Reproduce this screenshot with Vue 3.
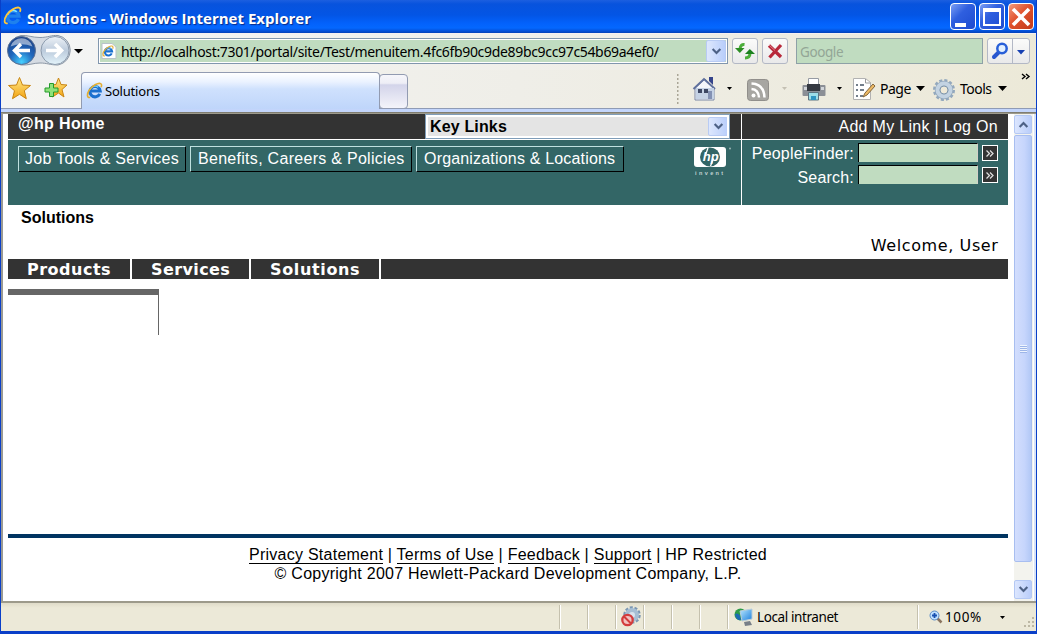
<script setup>
const menus = [
  { label: 'Job Tools & Services', cls: 'jobs' },
  { label: 'Benefits, Careers & Policies', cls: 'benefits' },
  { label: 'Organizations & Locations', cls: 'orgs' },
]
const tabs = [
  { label: 'Products', cls: 'products' },
  { label: 'Services', cls: 'services' },
  { label: 'Solutions', cls: 'solutions' },
]
const footerLinks = ['Privacy Statement', 'Terms of Use', 'Feedback', 'Support']
</script>

<template>
  <div class="window">
    <svg class="defs" width="0" height="0">
      <defs>
        <radialGradient id="orbBlue" cx=".5" cy=".9" r=".85">
          <stop offset="0" stop-color="#45d0ff" /><stop offset=".5" stop-color="#2067bd" /><stop offset="1" stop-color="#1a4288" />
        </radialGradient>
        <linearGradient id="orbPale" x1="0" y1="0" x2="0" y2="1">
          <stop offset="0" stop-color="#eef2f7" /><stop offset=".5" stop-color="#bccbdc" /><stop offset="1" stop-color="#e3f3fb" />
        </linearGradient>
        <linearGradient id="gold" x1="0" y1="0" x2="0" y2="1">
          <stop offset="0" stop-color="#ffe98a" /><stop offset="1" stop-color="#f3a412" />
        </linearGradient>
        <linearGradient id="screen" x1="0" y1="0" x2="1" y2="1">
          <stop offset="0" stop-color="#b8e8ff" /><stop offset="1" stop-color="#1d7fdc" />
        </linearGradient>
        <symbol id="ie" viewBox="0 0 18 18">
          <path d="M14.6 12.6A5.500 5.500 0 1 1 15.100 9.600H5.500" fill="none" stroke="#1a70cf" stroke-width="3.200" />
          <path d="M4.300 8.300a5.500 5.500 0 0 1 8.700-2.800" fill="none" stroke="#6fcdf7" stroke-width="1.300" />
          <path d="M4.400 16.200C1 17.500.5 13 3.500 8.500 7 3.500 12.500 1 15 1.500c1.800.4 1.800 2.200 1 4" fill="none" stroke="#e3ae32" stroke-width="1.700" />
        </symbol>
        <symbol id="chev" viewBox="0 0 10 8">
          <path d="M1.500 1.800 5 5.300l3.500-3.500" fill="none" stroke="#4d6185" stroke-width="2" />
        </symbol>
      </defs>
    </svg>

    <header class="titlebar">
      <svg class="title-icon" width="19" height="19"><use href="#ie" /></svg>
      <span class="title">Solutions - Windows Internet Explorer</span>
      <span class="caption min"><i></i></span>
      <span class="caption max"><i></i></span>
      <span class="caption close">
        <svg width="22" height="22" viewBox="0 0 22 22"><path d="M3 3 19 19M19 3 3 19" stroke="#fff" stroke-width="3.600" /></svg>
      </span>
    </header>

    <div class="navrow">
      <svg class="orbs" width="80" height="34" viewBox="0 0 80 34">
        <path d="M17 1.500C24 1 28 3.500 36 3.500S47 1 54 1.500a15 15 0 0 1 0 29.500C46 31 43 29 36 29s-11 2.500-19 2A15 15 0 0 1 17 1.500z" fill="#d5dbe3" stroke="#8b97a6" />
        <circle cx="17.500" cy="16.500" r="14" fill="url(#orbBlue)" stroke="#5a6f93" />
        <path d="M6.500 12.500a11.500 11.500 0 0 1 22 0Q17.500 8 6.500 12.500z" fill="#fff" opacity=".5" />
        <path d="M26 16.500H11.500M17 10l-6.500 6.500L17 23" fill="none" stroke="#fff" stroke-width="3.400" />
        <circle cx="51" cy="16.500" r="14" fill="url(#orbPale)" stroke="#8c9bad" />
        <path d="M42 16.500H56.500M51 10l6.500 6.500L51 23" fill="none" stroke="#fff" stroke-width="3.600" />
        <path d="M70 15h9l-4.500 4.500z" fill="#000" />
      </svg>
      <div class="address">
        <svg class="page-icon" width="16" height="16" viewBox="0 0 16 16"><path d="M1 .5h10L15 4v11.500H1z" fill="#fff" stroke="#b9c3c9" /><use href="#ie" x="1" y="2" width="12" height="12" /></svg>
        <span class="url">http://localhost:7301/portal/site/Test/menuitem.4fc6fb90c9de89bc9cc97c54b69a4ef0/</span>
        <span class="drop"><svg width="11" height="9"><use href="#chev" /></svg></span>
      </div>
      <span class="tool refresh">
        <svg width="20" height="18" viewBox="0 0 20 18"><path d="M9.500 2.500Q5.500 2 5 7" fill="none" stroke="#4cae3a" stroke-width="3" /><path d="M0 6h9.500L4.800 11z" fill="#2d8d25" /><path d="M10 16q5 0 5-5" fill="none" stroke="#4cae3a" stroke-width="3" /><path d="M10 12 14.800 7 20 12z" fill="#1c8120" /></svg>
      </span>
      <span class="tool stop">
        <svg width="18" height="18" viewBox="0 0 18 18"><path d="M3 3.500 15 15M15 3 3.500 15.500" stroke="#b8283a" stroke-width="3.300" /><path d="M3 3 9 8.500" stroke="#e07a84" /></svg>
      </span>
      <span class="websearch">Google</span>
      <span class="tool find">
        <svg width="24" height="24" viewBox="0 0 24 24"><path d="m11 13-5 5" stroke="#2856cf" stroke-width="4" stroke-linecap="round" /><circle cx="14" cy="9.500" r="4.700" fill="#e2f0ff" stroke="#285fd8" stroke-width="2.500" /></svg>
        <i></i>
        <svg width="16" height="24" viewBox="0 0 16 24"><path d="M4 11h8l-4 4.500z" fill="#1740b2" /></svg>
      </span>
    </div>

    <div class="tabrow">
      <div class="favs">
        <svg width="25" height="25" viewBox="0 0 25 25"><path d="m12.500 1.500 3 7.500 8 .5-6.200 5.200 2 8-6.800-4.400-7 4.400 2-8L1.500 9.500l8-.5z" fill="url(#gold)" stroke="#c98512" /></svg>
        <svg width="25" height="25" viewBox="0 0 25 25"><path d="m15.500 2 2.500 6.500 6 .5-5 4.500 2 7.500-5.500-4-6 4 2-7.500L6.500 9l6.500-.5z" fill="url(#gold)" stroke="#c98512" /><path d="M6.500 7.500h4v4.500H15v4h-4.500v4.500h-4V16H2v-4h4.500z" fill="#8ee27a" stroke="#249a2d" /></svg>
      </div>
      <div class="tab active"><svg width="17" height="17"><use href="#ie" /></svg><span>Solutions</span></div>
      <div class="tab blank"></div>
      <div class="commands">
        <svg width="360" height="40" viewBox="0 0 360 40">
          <path d="M.5 4v30" stroke="#aaa697" stroke-width="2" stroke-dasharray="2 2" />
          <!-- home -->
          <path d="M18 18 28 9l9 9v12H18z" fill="#f4f6fa" stroke="#7b87a5" />
          <path d="M32 7h4v8l-4-4z" fill="#35448b" /><path d="M16.500 19 27 9l11 10" fill="none" stroke="#60719d" stroke-width="2" />
          <path d="M19 18h18v11H19z" fill="#c5d2e5" /><path d="M21 19h4v4h-4zM27 19h4v4h-4z" fill="#3d4763" /><path d="M31 21h4v8h-4z" fill="#8391b3" />
          <path d="M50 17h5l-2.500 3z" />
          <!-- feeds -->
          <rect x="70.500" y="9.500" width="21" height="21" rx="3" fill="#a7a6a2" stroke="#918f8b" />
          <circle cx="76.500" cy="25.500" r="2" fill="#fff" /><path d="M74.500 19q7 .5 7.500 8.500M74.500 13.500Q87 14 87.500 27.500" fill="none" stroke="#fff" stroke-width="2.500" />
          <path d="M105 17h5l-2.500 3z" fill="#c4c0b3" />
          <!-- print -->
          <path d="M131.500 8.500h10V18h-10z" fill="#fff" stroke="#969ba3" /><rect x="125.500" y="15" width="23" height="11" rx="1" fill="#8b8f96" /><path d="M130 14h13v7h-13z" fill="#343941" /><path d="M127 17h3v3h-3zM144 17h3v3h-3z" fill="#d1d5da" /><path d="M131.500 22.500h10V30h-10z" fill="#9cdee9" stroke="#5c7481" /><path d="M134 26h5v4h-5z" fill="#3096c2" />
          <path d="M160 17h5l-2.500 3z" />
          <!-- page -->
          <path d="M176.500 8.500h12l5 4v17h-17z" fill="#fff" stroke="#b2b2b2" /><path d="M188.500 9v4h5" fill="none" stroke="#999" /><path d="M179 15h2m-2 5h2m-2 6h2M183 15h4m-4 5h4m-4 6h3" stroke="#465465" stroke-width="1.500" /><path d="m186 27 2-4 8-9 2 2-8 9z" fill="#edba66" stroke="#82663e" />
          <path d="M239 16h9l-4.500 5z" />
          <!-- gear -->
          <circle cx="267" cy="20" r="9.500" fill="none" stroke="#93a8bd" stroke-width="3" stroke-dasharray="3 1.975" />
          <circle cx="267" cy="20" r="6.700" fill="none" stroke="#93a8bd" stroke-width="5" /><circle cx="267" cy="20" r="6.500" fill="none" stroke="#c3d3e2" stroke-width="4" /><circle cx="267" cy="20" r="4" fill="#eee9d8" stroke="#7f97ae" />
          <path d="M321 16h9l-4.500 5z" />
          <path d="m345 4 3 2.500-3 2.500m4-5 3 2.500-3 2.500" fill="none" stroke="#000" stroke-width="1.400" />
        </svg>
        <span class="cmd page">Page</span><span class="cmd tools">Tools</span>
      </div>
    </div>
    <div class="band"></div>

    <div class="viewport">
      <main>
        <div class="hp-top">
          <b class="home">@hp Home</b>
          <div class="keylinks"><b>Key Links</b><span class="drop"><svg width="11" height="9"><use href="#chev" /></svg></span></div>
          <div class="account">Add My Link | Log On</div>
        </div>
        <div class="hp-mast">
          <nav><span v-for="m in menus" :key="m.label" class="menu" :class="m.cls">{{ m.label }}</span></nav>
          <svg class="hp-logo" width="40" height="32" viewBox="0 0 40 32">
            <rect x="1" y="1" width="32" height="20" rx="3" fill="#fff" />
            <ellipse cx="17" cy="11" rx="10" ry="9.500" fill="#336666" />
            <text x="9.800" y="14.800" class="hp">hp</text>
            <path d="m15 2-2.500 7M20.500 12.500 17.500 20" stroke="#fff" stroke-width="1.300" />
            <circle cx="37" cy="2.500" r="1" fill="#9ab5b5" />
            <text x="2" y="29" class="invent">invent</text>
          </svg>
          <div class="finders">
            <div class="finder"><span>PeopleFinder:</span><i class="field"></i><i class="go"><svg width="10" height="9" viewBox="0 0 10 9"><path d="m1.500 1.500 3 3-3 3m3.500-6 3 3-3 3" fill="none" stroke="#ddd" stroke-width="1.300" /></svg></i></div>
            <div class="finder"><span>Search:</span><i class="field"></i><i class="go"><svg width="10" height="9" viewBox="0 0 10 9"><path d="m1.500 1.500 3 3-3 3m3.500-6 3 3-3 3" fill="none" stroke="#ddd" stroke-width="1.300" /></svg></i></div>
          </div>
        </div>
        <h1>Solutions</h1>
        <div class="welcome">Welcome, User</div>
        <div class="sitetabs"><span v-for="t in tabs" :key="t.label" :class="t.cls">{{ t.label }}</span></div>
        <div class="side"></div>
        <footer>
          <div class="links"><template v-for="l in footerLinks" :key="l"><a>{{ l }}</a> | </template>HP Restricted</div>
          <div>© Copyright 2007 Hewlett-Packard Development Company, L.P.</div>
        </footer>
      </main>
      <div class="scroll">
        <span class="sbtn"><svg class="flip" width="11" height="9"><use href="#chev" /></svg></span>
        <span class="thumb"><i></i><i></i><i></i><i></i></span>
        <span class="gap"></span>
        <span class="sbtn"><svg width="11" height="9"><use href="#chev" /></svg></span>
      </div>
    </div>

    <div class="status">
      <span class="cell wide"></span><span class="cell"></span><span class="cell"></span>
      <span class="cell icon">
        <svg width="22" height="22" viewBox="0 0 22 22"><circle cx="12" cy="9" r="7.500" fill="none" stroke="#7b97b3" stroke-width="2.500" stroke-dasharray="3 1.700" /><circle cx="12" cy="9" r="5" fill="#d8e3ed" stroke="#a6bed3" stroke-width="4" /><circle cx="7.500" cy="14" r="5.200" fill="#f2c2c0" stroke="#d33c3c" stroke-width="2.300" /><path d="m4 10.500 7 7" stroke="#d33c3c" stroke-width="2" /></svg>
      </span>
      <span class="cell"></span><span class="cell"></span><span class="cell"></span>
      <span class="cell zone">
        <svg width="20" height="20" viewBox="0 0 20 20"><circle cx="6.500" cy="7.500" r="6" fill="#2e9c49" /><path d="M1 7q5-2 6 6Q2 14 1 7z" fill="#1c6bb4" /><path d="m6 4 12-2v10L8 14z" fill="url(#screen)" stroke="#b9cdda" /><path d="m10 15 6-1 2 4-7 1z" fill="#777f88" /></svg>
        <span>Local intranet</span>
      </span>
      <span class="zoom">
        <svg width="14" height="14" viewBox="0 0 14 14"><path d="m8.500 8.500 4 4" stroke="#8a7460" stroke-width="2.500" /><circle cx="5.500" cy="5.500" r="4.500" fill="#bfe0ff" stroke="#5a8cc6" /><path d="M5.500 3v5M3 5.500h5" stroke="#1750b0" stroke-width="1.800" /></svg>
        <span class="pct">100%</span>
        <svg class="arrow" width="7" height="5"><path d="M1 1h5L3.500 4z" /></svg>
        <svg class="grip" width="12" height="12" viewBox="0 0 12 12"><path d="M8 0h2v2H8zM4 4h2v2H4zM8 4h2v2H8zM0 8h2v2H0zM4 8h2v2H4zM8 8h2v2H8z" fill="#bdb8a4" /></svg>
      </span>
    </div>
  </div>
</template>

<style>
html, body { overflow: hidden; }
</style>

<style scoped>
* { box-sizing: border-box; }
.window { width: 1037px; height: 634px; background: #ece9d8; border: solid #0a3fc8; border-width: 0 1px 3px; font-family: "Noto Sans", sans-serif; color: #000; display: flex; flex-direction: column; overflow: hidden; }
.defs { position: absolute; }
svg { display: block; flex: none; }
.titlebar { height: 33px; flex: none; margin: 0 -1px; display: flex; align-items: center; background: linear-gradient(#1c5fe0 0, #0853dd 4px, #0355e5 15px, #0361fb 23px, #0468ff 28px, #0450d8 31px, #0342b8 33px); padding: 0 3px; }
.title-icon { margin-right: 5px; margin-top: -2px; filter: brightness(1.15); }
.title { flex: 1; color: #fff; font: bold 15px "Open Sans", sans-serif; white-space: nowrap; text-shadow: 1px 1px 1px #0a2a88; margin-top: 2px; letter-spacing: .02px; }
.caption { width: 26px; height: 27px; border: 1px solid #fff; border-radius: 4px; margin-left: 3px; background: linear-gradient(135deg, #7c9ff5, #2f5fdf 40%, #1d4bd0); display: grid; place-items: center; }
.min i { width: 11px; height: 4px; background: #fff; margin: 16px 5px 0 0; }
.max i { width: 18px; height: 18px; border: 2px solid #fff; border-top-width: 4px; }
.close { background: linear-gradient(135deg, #f29b7d, #e0522e 45%, #c23a1a); }
.navrow { height: 37px; flex: none; display: flex; background: linear-gradient(90deg, #f4f5f5, #efeee8 60%, #ece9d8); padding-left: 3px; border-top: 1px solid #f6eff0; }
.orbs { margin-right: 14px; }
.address { width: 630px; height: 26px; margin-top: 4px; border: 1px solid #8196ae; background: #c0dcc0; outline: 1px solid #fff; outline-offset: -2px; display: flex; align-items: center; flex: none; }
.page-icon { margin: 0 4px 0 2px; }
.url { flex: 1; font-size: 14px; letter-spacing: -.33px; white-space: nowrap; padding-top: 1px; }
.drop { width: 20px; align-self: stretch; margin: 1px; background: linear-gradient(90deg, #dde7fd, #b9cefb); border: 1px solid #b8cbf4; border-radius: 2px; display: grid; place-items: center; }
.tool { height: 26px; width: 26px; margin: 4px 0 0 4px; border: 1px solid #b3b8c5; border-radius: 3px; background: linear-gradient(#fbfbfa, #e9e9ea); display: flex; align-items: center; justify-content: center; flex: none; }
.websearch { width: 187px; height: 26px; margin: 4px 0 0 8px; flex: none; border: 1px solid #8ea1a7; background: #c0dcc0; color: #93a696; font-size: 13.500px; letter-spacing: -.4px; line-height: 26px; padding-left: 3px; }
.find { width: 43px; }
.find i { width: 1px; align-self: stretch; background: #b3b8c5; }
.tabrow { height: 39px; flex: none; display: flex; background: linear-gradient(90deg, #f4f4f2, #efeee8 50%, #ece9d8); border-bottom: 1px solid #8f9bb5; }
.favs { width: 80px; display: flex; padding: 6px 0 0 6px; gap: 11px; flex: none; }
.tab { border: 1px solid #929bb1; border-radius: 4px 4px 0 0; font-size: 13px; flex: none; }
.active { width: 299px; height: 39px; margin-top: 2px; border-bottom: 0; background: linear-gradient(#fff, #eaf2ff 9px, #cfe1fd 16px, #bdd4fa); display: flex; align-items: center; padding: 0 0 3px 4px; letter-spacing: -.2px; }
.active span { margin-left: 2px; }
.blank { width: 29px; height: 35px; margin: 4px 0 0 -1px; background: linear-gradient(#f6f6fa, #eeeef6 25%, #d3d4ea 30%, #f4f4fa); border-radius: 4px; }
.commands { position: relative; margin-left: 269px; }
.cmd { position: absolute; top: 9px; font-size: 14px; line-height: 20px; letter-spacing: -.5px; }
.page { left: 203px; }
.tools { left: 283px; }
.band { height: 5px; flex: none; background: linear-gradient(#c3d5fb 0 3px, #716f64 3px, #aca899); }
.viewport { height: 487px; flex: none; display: flex; background: #fff; border-left: 2px solid #9a9a93; border-right: 2px solid #d9e3f5; }
main { width: 1000px; margin-left: 5px; flex: none; font: 16px "Liberation Sans", Arial, sans-serif; }
.hp-top { height: 26px; background: #333; color: #fff; display: flex; border-bottom: 1px solid #fff; line-height: 19px; }
.home { width: 417px; padding-left: 10px; letter-spacing: .35px; }
.keylinks { width: 305px; height: 25px; border: 1px solid #7f9db9; background: #e4e4e4; outline: 2px solid #fff; outline-offset: -3px; color: #000; display: flex; align-items: center; padding-left: 4px; letter-spacing: .15px; }
.keylinks b { flex: 1; }
.keylinks .drop { margin: 2px 1px; }
.account { width: 267px; margin-left: 11px; border-left: 1px solid #fff; text-align: right; padding-right: 10px; line-height: 26px; letter-spacing: .3px; }
.hp-mast { height: 65px; background: #366; color: #fff; display: flex; }
nav { display: flex; gap: 4px; padding: 6px 0 0 10px; width: 685px; flex: none; }
.menu { height: 26px; border: 1px solid; border-color: #bfe0df #000 #000 #bfe0df; padding-left: 6px; line-height: 24px; white-space: nowrap; letter-spacing: .29px; }
.jobs { width: 168px; }
.benefits { width: 222px; padding-left: 7px; }
.orgs { width: 208px; padding-left: 7px; letter-spacing: .18px; }
.hp-logo { margin-top: 6px; }
.hp { font: italic bold 13px "Liberation Sans", sans-serif; fill: #fff; }
.invent { font: bold 5.500px "Liberation Sans", sans-serif; fill: #c2d4d4; letter-spacing: 2.400px; }
.finders { width: 267px; margin-left: 8px; border-left: 1px solid #fff; padding-top: 3px; }
.finder { display: flex; justify-content: flex-end; height: 22px; padding-right: 10px; }
.finder span { line-height: 22px; margin-right: 4px; letter-spacing: .2px; }
.finder + .finder span { line-height: 25px; }
.field { width: 120px; height: 19px; background: #c0dcc0; border: solid #000; border-width: 1px 0 0 1px; border-right: 1px solid #d4d0c8; }
.go { width: 16px; height: 16px; margin: 2px 0 0 4px; border: 1px solid #fff; background: #333; display: grid; place-items: center; }
h1 { font-size: 16px; height: 26px; line-height: 25px; margin: 0; padding-left: 13px; }
.welcome { text-align: right; padding-right: 9.500px; height: 28px; font: 16px/29px "DejaVu Sans", Verdana, sans-serif; letter-spacing: .6px; }
.sitetabs { height: 20px; display: flex; background: #333; color: #fff; font: bold 16px/22px "DejaVu Sans", Verdana, sans-serif; letter-spacing: .5px; }
.sitetabs span { border-right: 2px solid #fff; padding-left: 19px; flex: none; }
.products { width: 124px; }
.services { width: 119px; letter-spacing: .4px; }
.solutions { width: 130px; letter-spacing: .65px; }
.side { width: 151px; height: 46px; margin-top: 10px; border-top: 6px solid #666; border-right: 1px solid #666; }
footer { margin-top: 199px; border-top: 4px solid #003461; padding-top: 7px; text-align: center; line-height: 19px; letter-spacing: .25px; }
a { border-bottom: 1px solid #000; }
.scroll { width: 19px; margin-left: 6px; background: #f3f3ee; display: flex; flex-direction: column; flex: none; padding: 1px 1px 2px 0; }
.sbtn { height: 19px; border: 1px solid #b4c8f4; border-radius: 2px; background: linear-gradient(90deg, #dce6fe, #b9cdfa); display: grid; place-items: center; flex: none; }
.flip { transform: rotate(180deg); }
.thumb { height: 427px; margin-top: 1px; border: 1px solid #a8bef0; border-radius: 2px; background: linear-gradient(90deg, #d3defd, #c6d5fc 60%, #b2c8f6); display: flex; flex-direction: column; align-items: center; justify-content: center; gap: 1px; }
.thumb i { width: 7px; height: 1px; background: #eef4fe; box-shadow: 0 1px #9db5e8; }
.gap { flex: 1; }
.status { flex: 1; border-top: 2px solid #9d9a8b; background: linear-gradient(#e0dcc9, #ece9d8 5px); display: flex; align-items: stretch; font-size: 13.500px; letter-spacing: -.4px; }
.cell { width: 28px; border-right: 1px solid #c5c1ae; box-shadow: 1px 0 #fff; margin: 2px 0; display: flex; align-items: center; flex: none; }
.wide { width: 559px; }
.icon { padding-left: 4px; }
.zone { width: 190px; padding-left: 6px; gap: 3px; }
.zoom { flex: 1; display: flex; align-items: center; padding-left: 11px; gap: 2px; position: relative; }
.pct { width: 38px; letter-spacing: .6px; }
.arrow { margin-left: 14px; }
.grip { position: absolute; right: 0; bottom: 2px; }
</style>
